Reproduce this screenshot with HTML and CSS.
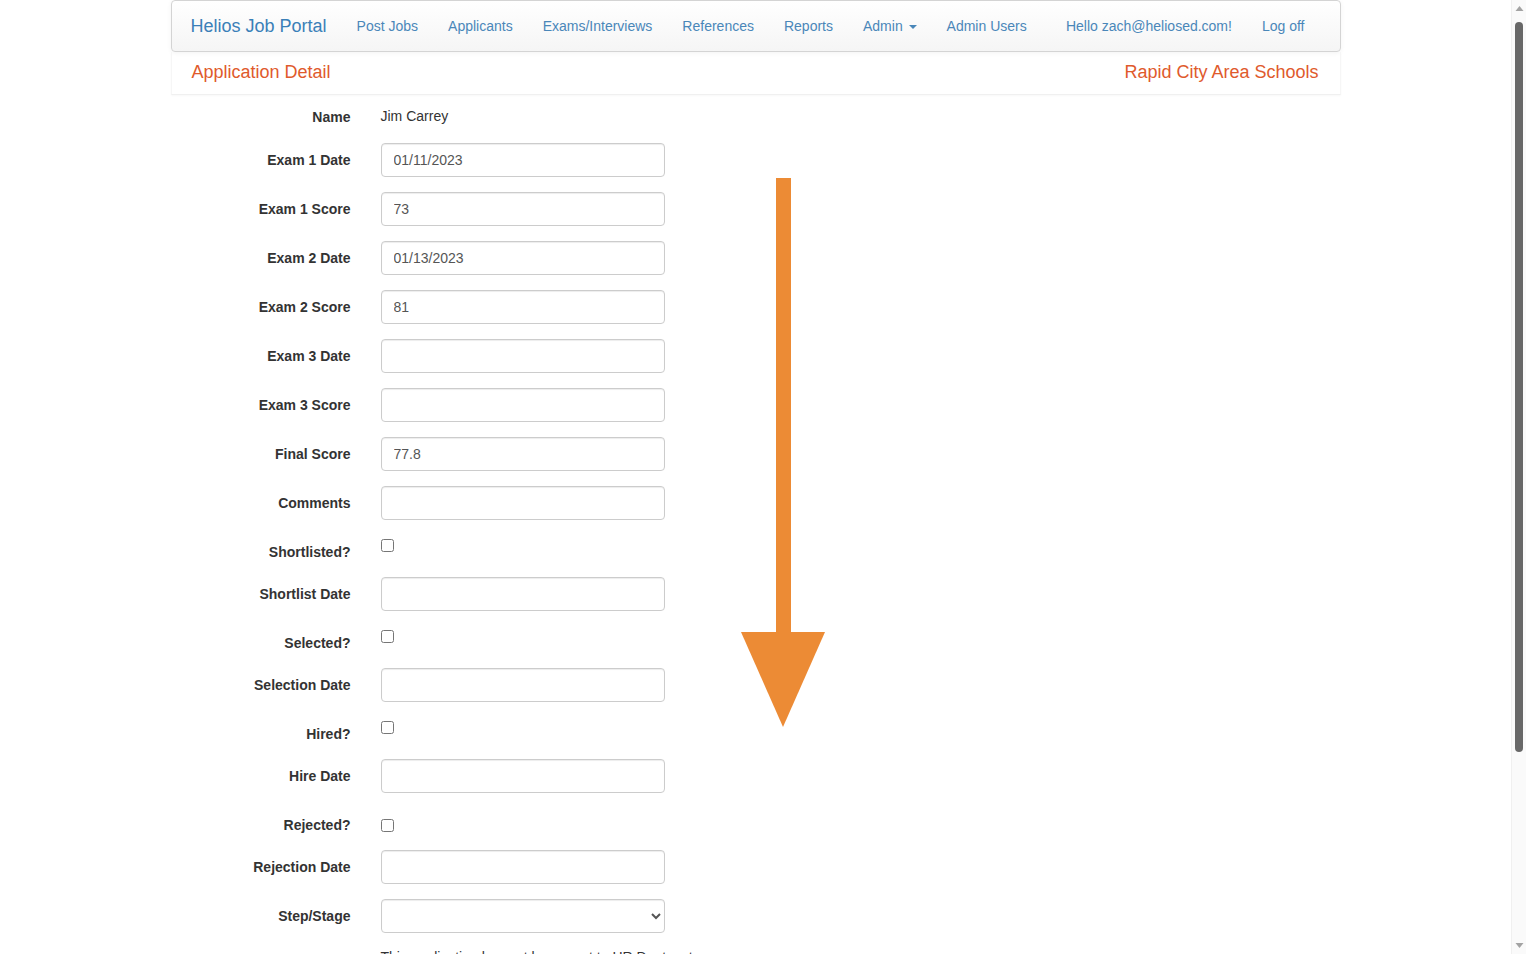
FILE: index.html
```html
<!DOCTYPE html>
<html lang="en">
<head>
<meta charset="utf-8">
<title>Application Detail - Helios Job Portal</title>
<link rel="stylesheet" href="styles.css">
</head>
<body>
<div class="container">
  <nav class="navbar">
    <a class="brand" href="#">Helios Job Portal</a>
    <ul class="nav">
      <li><a href="#">Post Jobs</a></li>
      <li><a href="#">Applicants</a></li>
      <li><a href="#">Exams/Interviews</a></li>
      <li><a href="#">References</a></li>
      <li><a href="#">Reports</a></li>
      <li><a href="#">Admin <span class="caret"></span></a></li>
      <li><a href="#">Admin Users</a></li>
    </ul>
    <ul class="nav nav-right">
      <li><a href="#">Hello zach@heliosed.com!</a></li>
      <li><a href="#">Log off</a></li>
    </ul>
  </nav>

  <div class="page-header">
    <span>Application Detail</span>
    <span>Rapid City Area Schools</span>
  </div>

  <form class="form">
    <div class="row row-static">
      <label class="lbl">Name</label>
      <div class="ctl"><p class="static">Jim Carrey</p></div>
    </div>
    <div class="row"><label class="lbl">Exam 1 Date</label><div class="ctl"><input class="input" type="text" value="01/11/2023"></div></div>
    <div class="row"><label class="lbl">Exam 1 Score</label><div class="ctl"><input class="input" type="text" value="73"></div></div>
    <div class="row"><label class="lbl">Exam 2 Date</label><div class="ctl"><input class="input" type="text" value="01/13/2023"></div></div>
    <div class="row"><label class="lbl">Exam 2 Score</label><div class="ctl"><input class="input" type="text" value="81"></div></div>
    <div class="row"><label class="lbl">Exam 3 Date</label><div class="ctl"><input class="input" type="text" value=""></div></div>
    <div class="row"><label class="lbl">Exam 3 Score</label><div class="ctl"><input class="input" type="text" value=""></div></div>
    <div class="row"><label class="lbl">Final Score</label><div class="ctl"><input class="input" type="text" value="77.8"></div></div>
    <div class="row"><label class="lbl">Comments</label><div class="ctl"><input class="input" type="text" value=""></div></div>
    <div class="row row-check"><label class="lbl">Shortlisted?</label><div class="ctl"><input class="check" type="checkbox"></div></div>
    <div class="row"><label class="lbl">Shortlist Date</label><div class="ctl"><input class="input" type="text" value=""></div></div>
    <div class="row row-check"><label class="lbl">Selected?</label><div class="ctl"><input class="check" type="checkbox"></div></div>
    <div class="row"><label class="lbl">Selection Date</label><div class="ctl"><input class="input" type="text" value=""></div></div>
    <div class="row row-check"><label class="lbl">Hired?</label><div class="ctl"><input class="check" type="checkbox"></div></div>
    <div class="row"><label class="lbl">Hire Date</label><div class="ctl"><input class="input" type="text" value=""></div></div>
    <div class="row row-check row-check-mid"><label class="lbl">Rejected?</label><div class="ctl"><input class="check" type="checkbox"></div></div>
    <div class="row"><label class="lbl">Rejection Date</label><div class="ctl"><input class="input" type="text" value=""></div></div>
    <div class="row"><label class="lbl">Step/Stage</label><div class="ctl"><select class="input select"><option></option></select></div></div>
    <div class="row row-note">
      <div class="lbl"></div>
      <div class="ctl"><p class="note">This application has not been sent to HR Dept. yet.</p></div>
    </div>
    <div class="row">
      <div class="lbl"></div>
      <div class="ctl"><button class="btn" type="button">Save</button></div>
    </div>
    <div class="row">
      <div class="lbl"></div>
      <div class="ctl"><a class="back" href="#">Back to List</a></div>
    </div>
  </form>

  <footer class="footer">&copy; 2023 - Helios Job Portal</footer>

  <svg class="arrow" width="86" height="552" viewBox="0 0 86 552" aria-hidden="true">
    <rect x="35" y="0" width="15" height="456" fill="#ec8b35"/>
    <polygon points="0,454 84,454 42,549" fill="#ec8b35"/>
  </svg>
</div>

<div class="scrollbar" aria-hidden="true">
  <svg class="sb-arrow" width="15" height="17" viewBox="0 0 15 17"><polygon points="3.5,11 11.5,11 7.5,6" fill="#a3a3a3"/></svg>
  <div class="sb-track"><div class="sb-thumb"></div></div>
  <svg class="sb-arrow" width="15" height="17" viewBox="0 0 15 17"><polygon points="3.5,6 11.5,6 7.5,11" fill="#a3a3a3"/></svg>
</div>
</body>
</html>
```

FILE: styles.css
```css
body {
  margin: 0 15px 0 0;
  font-family: "Liberation Sans", Arial, sans-serif;
  font-size: 14px;
  line-height: 20px;
  color: #333;
  background: #fff;
}

.container {
  position: relative;
  width: 1170px;
  margin: 0 auto;
}

/* navbar */
.navbar {
  display: flex;
  align-items: center;
  height: 50px;
  border: 1px solid #d4d4d4;
  border-radius: 4px;
  background: linear-gradient(to bottom, #ffffff 0%, #f5f5f5 100%);
  box-shadow: inset 0 1px 0 rgba(255,255,255,.15), 0 1px 5px rgba(0,0,0,.05);
  padding: 0 20px 0 4px;
}
.brand {
  padding: 15px;
  font-size: 18px;
  line-height: 20px;
  color: #3a80b8;
  text-decoration: none;
}
.nav {
  display: flex;
  list-style: none;
  margin: 0;
  padding: 0;
}
.nav a {
  display: block;
  padding: 15px;
  color: #4a87b9;
  text-decoration: none;
  line-height: 20px;
}
.nav-right {
  margin-left: auto;
}
.caret {
  display: inline-block;
  width: 0;
  height: 0;
  margin-left: 2px;
  vertical-align: middle;
  border-top: 4px solid #4a87b9;
  border-left: 4px solid transparent;
  border-right: 4px solid transparent;
}

/* header */
.page-header {
  display: flex;
  justify-content: space-between;
  padding: 9px 21px 10px 20px;
  font-size: 18px;
  line-height: 23px;
  color: #e05a2c;
  border-left: 1px solid #f6f6f6;
  border-right: 1px solid #f6f6f6;
  border-bottom: 1px solid #f0f0f0;
  box-shadow: 0 1px 2px rgba(0,0,0,.03);
}

/* form */
.form {
  margin-top: 5px;
}
.row {
  display: flex;
  margin-bottom: 15px;
}
.lbl {
  box-sizing: border-box;
  width: 195px;
  flex: none;
  padding: 7px 15px 0;
  text-align: right;
  font-weight: bold;
  line-height: 20px;
}
.ctl {
  padding: 0 15px;
}
.row-static {
  height: 28px;
}
.static {
  margin: 0;
  padding-top: 6px;
  line-height: 20px;
}
.input {
  box-sizing: border-box;
  display: block;
  width: 284px;
  height: 34px;
  padding: 6px 12px;
  font-family: "Liberation Sans", Arial, sans-serif;
  font-size: 14px;
  line-height: 20px;
  color: #555;
  background: #fff;
  border: 1px solid #ccc;
  border-radius: 4px;
  box-shadow: inset 0 1px 1px rgba(0,0,0,.075);
}
.select {
  padding: 6px 8px;
}
.row-check {
  height: 27px;
}
.check {
  display: block;
  width: 13px;
  height: 13px;
  margin: 4px 0 0 0;
}
.row-check-mid .check {
  margin-top: 11px;
}
.row-note {
  margin-top: -1px;
}
.note {
  margin: 0;
  line-height: 20px;
  color: #333;
}
.btn {
  font-family: "Liberation Sans", Arial, sans-serif;
  font-size: 14px;
  padding: 6px 12px;
  color: #fff;
  background: #337ab7;
  border: 1px solid #2e6da4;
  border-radius: 4px;
}
.back {
  color: #337ab7;
  text-decoration: none;
}
.footer {
  padding: 20px 15px 80px;
  border-top: 1px solid #eee;
  color: #777;
}

/* annotation arrow */
.arrow {
  position: absolute;
  left: 570px;
  top: 178px;
}

/* browser scrollbar (drawn, since the headless browser hides it) */
.scrollbar {
  position: fixed;
  top: 0;
  right: 0;
  bottom: 0;
  width: 15px;
  display: flex;
  flex-direction: column;
  background: #fafafa;
  border-left: 1px solid #f0f0f0;
  box-sizing: border-box;
}
.sb-arrow {
  display: block;
  flex: none;
}
.sb-track {
  flex: 1;
  padding: 5px 3px 0 3px;
}
.sb-thumb {
  height: 730px;
  background: #686868;
  border-radius: 5px;
}
```
